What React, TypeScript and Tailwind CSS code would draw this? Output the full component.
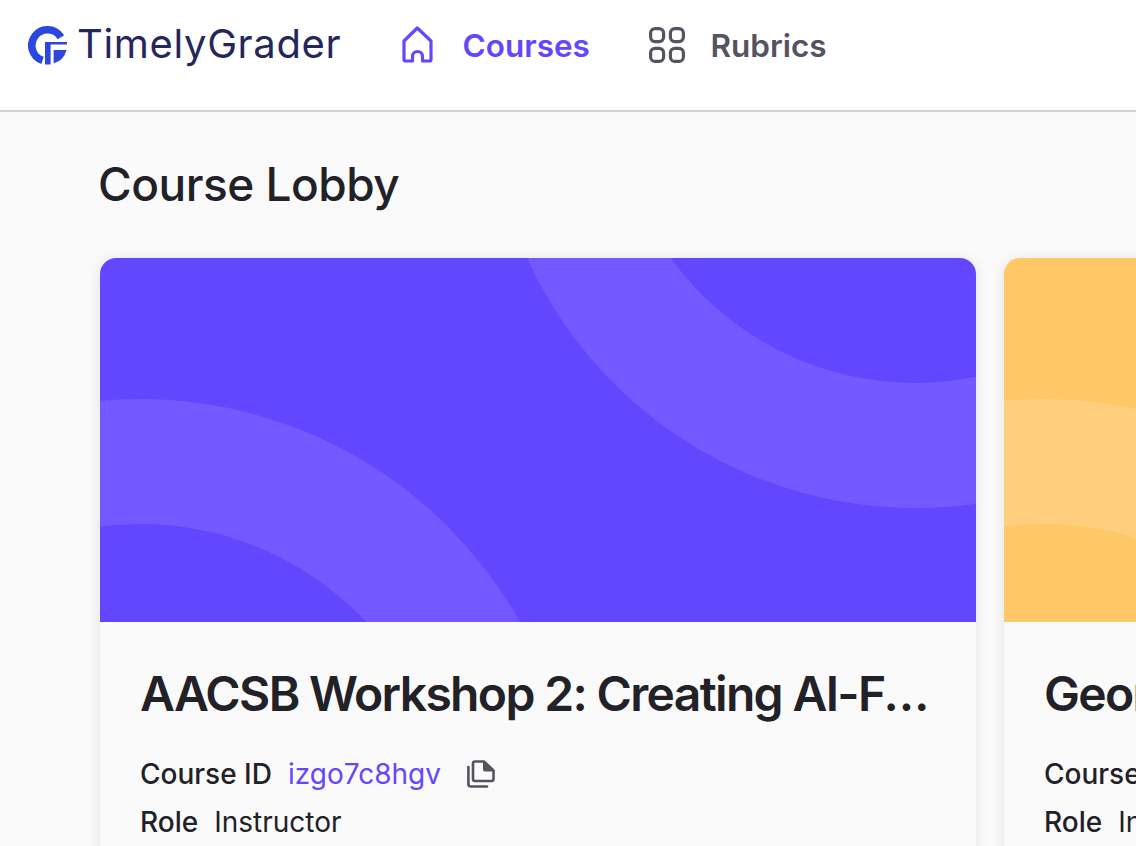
const inter = "font-['Inter',sans-serif]";

function Logo() {
  return (
    <svg width="40" height="40" viewBox="0 0 40 40" className="shrink-0">
      <path d="M32.9 11.3 A15.7 15.7 0 1 0 14.57 34.4" fill="none" stroke="#2b47e0" strokeWidth="7.6" />
      <path d="M17 16 H39 V18.6 H22.6 V38.5 H17 Z" fill="#2b47e0" />
      <path d="M25.6 24 H38.6 A19.5 19.5 0 0 1 25.6 37.5 Z" fill="#2b47e0" />
    </svg>
  );
}

function HomeIcon() {
  return (
    <svg width="31" height="37" viewBox="0 0 31 37" fill="none" stroke="#6347ff" strokeWidth="3.2" strokeLinejoin="round" className="shrink-0">
      <path d="M2 15 L15.3 2 L29 15 V33.5 A1.5 1.5 0 0 1 27.5 35 H20.5 V30.5 A5 5 0 0 0 10.5 30.5 V35 H3.5 A1.5 1.5 0 0 1 2 33.5 Z" />
    </svg>
  );
}

function GridIcon() {
  return (
    <svg width="36" height="36" viewBox="0 0 36 36" fill="none" stroke="#55535f" strokeWidth="3.2" className="shrink-0">
      <rect x="1.6" y="1.6" width="13" height="13" rx="4.5" />
      <rect x="21.4" y="1.6" width="13" height="13" rx="4.5" />
      <rect x="1.6" y="21.4" width="13" height="13" rx="4.5" />
      <rect x="21.4" y="21.4" width="13" height="13" rx="4.5" />
    </svg>
  );
}

function CopyIcon() {
  return (
    <svg width="28" height="28" viewBox="0 0 28 28" className="shrink-0" fill="none">
      <path d="M1.4 7 V24 A2.5 2.5 0 0 0 3.9 26.5 H20" stroke="#55535f" strokeWidth="2.6" strokeLinecap="round" />
      <path d="M8 1.5 H17 L26.5 10.5 V19 A2 2 0 0 1 24.5 21 H8 A2 2 0 0 1 6 19 V3.5 A2 2 0 0 1 8 1.5 Z" stroke="#55535f" strokeWidth="2.6" strokeLinejoin="round" />
      <path d="M16 1 L27 11.5 H18 A2 2 0 0 1 16 9.5 Z" fill="#55535f" />
    </svg>
  );
}

function Banner({ base, ring }: { base: string; ring: string }) {
  return (
    <svg className="block w-full h-[364px]" viewBox="0 0 876 364" preserveAspectRatio="xMinYMin slice" style={{ background: base }}>
      <circle cx="815" cy="-176" r="363.5" fill="none" stroke={ring} strokeWidth="125" />
      <circle cx="40" cy="576" r="372.5" fill="none" stroke={ring} strokeWidth="125" />
    </svg>
  );
}

function Card({ title, id, base, ring }: { title: string; id: string; base: string; ring: string }) {
  return (
    <div className="w-[876px] shrink-0 rounded-t-[16px] overflow-hidden bg-[#fafafa] shadow-[0_2px_14px_rgba(0,0,0,0.1)]">
      <Banner base={base} ring={ring} />
      <div className="pl-[40px] pr-[40px] pt-[36px] h-[300px]">
        <h2 className="text-[48px] leading-[72px] font-semibold text-[#212127] truncate tracking-[-1.65px]">{title}</h2>
        <div className="mt-[20px] flex items-center h-[48px] text-[28px] leading-[48px] text-[#212127]">
          <span className="font-medium">Course ID</span>
          <span className="ml-[16px] text-[#6347ff]">{id}</span>
          <span className="ml-[26px]"><CopyIcon /></span>
        </div>
        <div className="flex items-center h-[48px] text-[28px] leading-[48px] text-[#212127]">
          <span className="font-medium">Role</span>
          <span className="ml-[16px]">Instructor</span>
        </div>
      </div>
    </div>
  );
}

export default function App() {
  return (
    <div className={`${inter} w-[1136px] h-[846px] overflow-hidden bg-[#fafafa]`}>
      <header className="h-[112px] bg-white border-b-2 border-[#d2d1d6] flex items-start">
        <div className="ml-[28px] mt-[26px] w-[314px] flex items-center gap-[9px] h-[40px]">
          <Logo />
          <span className="text-[40px] leading-[36px] mb-[4px] text-[#25265e] tracking-[0.65px]">TimelyGrader</span>
        </div>
        <nav className="ml-[60px] mt-[26px] flex items-center h-[37px]">
          <HomeIcon />
          <span className="ml-[29.5px] mt-[3px] text-[31.5px] leading-[40px] font-semibold text-[#6347ff]">Courses</span>
          <span className="ml-[59.5px]"><GridIcon /></span>
          <span className="ml-[25px] mt-[3px] text-[31.5px] leading-[40px] font-semibold text-[#55535f]">Rubrics</span>
        </nav>
      </header>
      <main className="pl-[98px] pt-[40px]">
        <h1 className="text-[46px] leading-[64px] font-medium text-[#212127] tracking-[-0.5px]">Course Lobby</h1>
        <div className="mt-[42px] ml-[2px] flex gap-[28px]">
          <Card title="AACSB Workshop 2: Creating AI-Friendly Assignments" id="izgo7c8hgv" base="#6347ff" ring="#7359ff" />
          <Card title="Georgia Tech Workshop" id="kd82mzq1pw" base="#ffc766" ring="#ffcf7d" />
        </div>
      </main>
    </div>
  );
}
